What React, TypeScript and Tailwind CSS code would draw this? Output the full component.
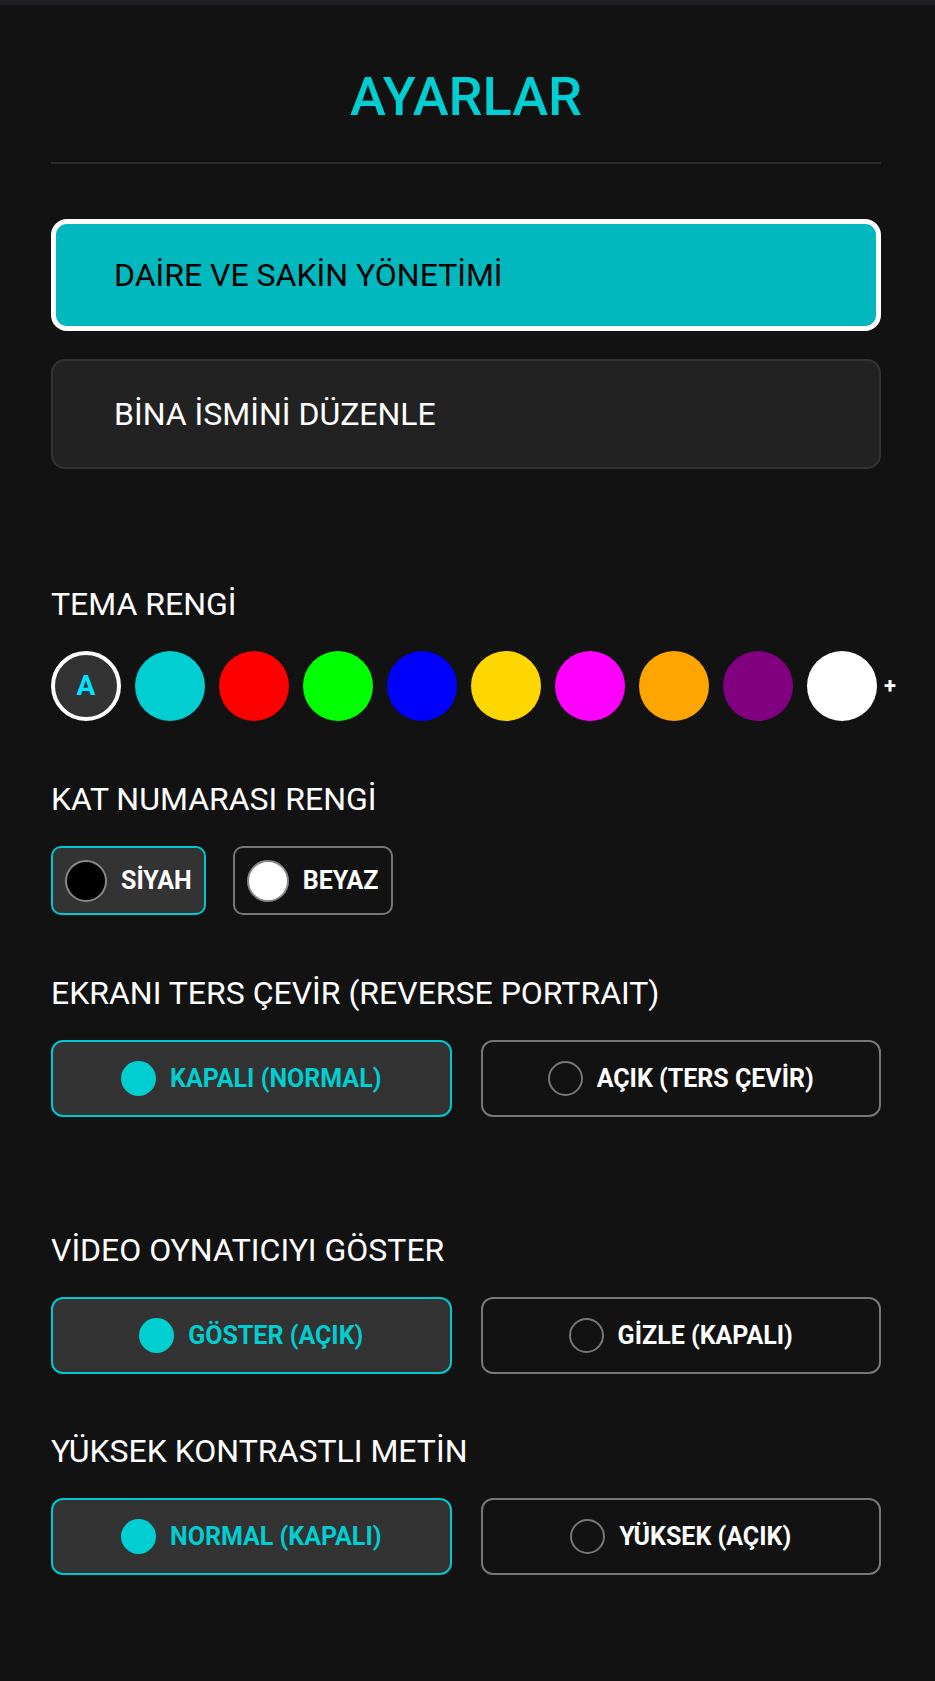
import React from 'react';

const themeColors = ['#00ced1', '#ff0000', '#00ff00', '#0000ff', '#ffd700', '#ff00ff', '#ffa500', '#800080', '#ffffff'];

const Heading = ({ children, className = '' }: { children: React.ReactNode; className?: string }) => (
  <h2 className={`text-[32px] leading-[38px] font-normal text-white mb-7 ${className}`}>{children}</h2>
);

const Toggle = ({ left, right }: { left: string; right: string }) => (
  <div className="grid grid-cols-2 gap-[29px]">
    <button className="h-[77px] rounded-[12px] border-2 border-[#00c8d0] bg-[#333333] flex items-center justify-center gap-[14px]">
      <span className="w-[35px] h-[35px] rounded-full bg-[#00ced1]" />
      <span className="text-[25px] font-bold text-[#00ced1]">{left}</span>
    </button>
    <button className="h-[77px] rounded-[12px] border-2 border-[#777777] bg-[#121212] flex items-center justify-center gap-[14px]">
      <span className="w-[35px] h-[35px] rounded-full border-2 border-[#777777]" />
      <span className="text-[25px] font-bold text-white">{right}</span>
    </button>
  </div>
);

const App = () => {
  return (
    <div className="min-h-screen bg-[#121212] font-['Roboto',sans-serif]">
      <div className="h-[5px] bg-[#1d1f22]" />
      <div className="pl-[51px] pr-[54px] pb-[100px]">
        <h1 className="pt-[65px] text-center text-[54px] leading-none font-medium text-[#00ced1]">AYARLAR</h1>
        <div className="mt-[38px] h-[2px] bg-[#2b2b2b]" />

        <button className="mt-[55px] w-full h-[112px] rounded-[16px] border-[5px] border-white bg-[#00b8bd] text-left pl-[58px] text-[32px] text-black">
          DAİRE VE SAKİN YÖNETİMİ
        </button>
        <button className="mt-[28px] w-full h-[110px] rounded-[14px] border-2 border-[#333333] bg-[#222222] text-left pl-[61px] text-[32px] text-white">
          BİNA İSMİNİ DÜZENLE
        </button>

        <Heading className="mt-[116px]">TEMA RENGİ</Heading>
        <div className="flex items-center gap-[14px]">
          <div className="shrink-0 w-[70px] h-[70px] rounded-full border-4 border-white bg-[#333333] flex items-center justify-center text-[28px] font-bold text-[#00e5ff]">
            A
          </div>
          {themeColors.map((c) => (
            <div key={c} className="shrink-0 w-[70px] h-[70px] rounded-full" style={{ backgroundColor: c }} />
          ))}
          <span className="shrink-0 -ml-[7px] text-[22px] leading-none font-bold text-white">+</span>
        </div>

        <Heading className="mt-[59px]">KAT NUMARASI RENGİ</Heading>
        <div className="flex gap-[27px]">
          <button className="h-[69px] rounded-[10px] border-2 border-[#00c8d0] bg-[#333333] flex items-center gap-[14px] pl-[12px] pr-[12px]">
            <span className="w-[42px] h-[42px] rounded-full bg-black border-2 border-[#888888]" />
            <span className="text-[25px] font-bold text-white">SİYAH</span>
          </button>
          <button className="h-[69px] rounded-[10px] border-2 border-[#777777] bg-[#121212] flex items-center gap-[14px] pl-[12px] pr-[12px]">
            <span className="w-[42px] h-[42px] rounded-full bg-white border-2 border-[#888888]" />
            <span className="text-[25px] font-bold text-white">BEYAZ</span>
          </button>
        </div>

        <Heading className="mt-[59px]">EKRANI TERS ÇEVİR (REVERSE PORTRAIT)</Heading>
        <Toggle left="KAPALI (NORMAL)" right="AÇIK (TERS ÇEVİR)" />

        <Heading className="mt-[114px]">VİDEO OYNATICIYI GÖSTER</Heading>
        <Toggle left="GÖSTER (AÇIK)" right="GİZLE (KAPALI)" />

        <Heading className="mt-[58px]">YÜKSEK KONTRASTLI METİN</Heading>
        <Toggle left="NORMAL (KAPALI)" right="YÜKSEK (AÇIK)" />
      </div>
    </div>
  );
};

export default App;
